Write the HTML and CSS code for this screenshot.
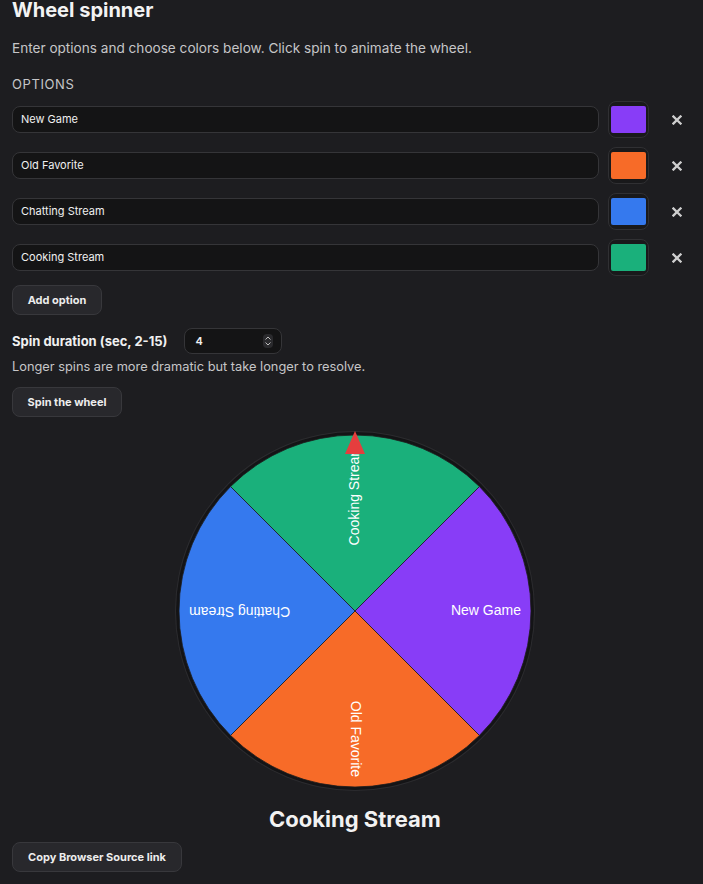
FILE: index.html
```html
<!DOCTYPE html>
<html lang="en">
<head>
<meta charset="utf-8">
<title>Wheel spinner</title>
<link rel="stylesheet" href="styles.css">
</head>
<body>
<main class="page">
  <h1 class="title">Wheel spinner</h1>
  <p class="desc">Enter options and choose colors below. Click spin to animate the wheel.</p>
  <div class="section-label">OPTIONS</div>
  <div class="options">
    <div class="opt-row">
      <div class="text-input">New Game</div>
      <div class="swatch"><span class="swatch-fill purple"></span></div>
      <button class="remove" aria-label="Remove"><svg viewBox="0 0 10 10" width="10" height="10"><path d="M1.5 1.5 L8.5 8.5 M8.5 1.5 L1.5 8.5"/></svg></button>
    </div>
    <div class="opt-row">
      <div class="text-input">Old Favorite</div>
      <div class="swatch"><span class="swatch-fill orange"></span></div>
      <button class="remove" aria-label="Remove"><svg viewBox="0 0 10 10" width="10" height="10"><path d="M1.5 1.5 L8.5 8.5 M8.5 1.5 L1.5 8.5"/></svg></button>
    </div>
    <div class="opt-row">
      <div class="text-input">Chatting Stream</div>
      <div class="swatch"><span class="swatch-fill blue"></span></div>
      <button class="remove" aria-label="Remove"><svg viewBox="0 0 10 10" width="10" height="10"><path d="M1.5 1.5 L8.5 8.5 M8.5 1.5 L1.5 8.5"/></svg></button>
    </div>
    <div class="opt-row">
      <div class="text-input">Cooking Stream</div>
      <div class="swatch"><span class="swatch-fill green"></span></div>
      <button class="remove" aria-label="Remove"><svg viewBox="0 0 10 10" width="10" height="10"><path d="M1.5 1.5 L8.5 8.5 M8.5 1.5 L1.5 8.5"/></svg></button>
    </div>
  </div>
  <button class="btn btn-add">Add option</button>
  <div class="duration">
    <span class="duration-label">Spin duration (sec, 2-15)</span>
    <div class="num-input">
      <span>4</span>
      <span class="stepper"><svg viewBox="0 0 10 14" width="10" height="14"><path d="M2.5 5.5 L5 3 L7.5 5.5 M2.5 8.5 L5 11 L7.5 8.5"/></svg></span>
    </div>
  </div>
  <p class="hint">Longer spins are more dramatic but take longer to resolve.</p>
  <button class="btn btn-spin">Spin the wheel</button>
  <div class="wheel-wrap">
    <svg class="wheel" viewBox="0 0 360 360" width="360" height="360">
      <circle cx="180" cy="180" r="180" fill="#2c2c2f"/>
      <circle cx="180" cy="180" r="179" fill="#141416"/>
      <g stroke="#1d1d1d" stroke-width="0.8">
        <path d="M180 180 L55.55 55.55 A176 176 0 0 1 304.45 55.55 Z" fill="#1ab07b"/>
        <path d="M180 180 L304.45 55.55 A176 176 0 0 1 304.45 304.45 Z" fill="#883df7"/>
        <path d="M180 180 L304.45 304.45 A176 176 0 0 1 55.55 304.45 Z" fill="#f76b28"/>
        <path d="M180 180 L55.55 304.45 A176 176 0 0 1 55.55 55.55 Z" fill="#3579ee"/>
      </g>
      <g class="labels">
        <text x="346" y="180" transform="rotate(0 180 180)">New Game</text>
        <text x="346" y="180" transform="rotate(90 180 180)">Old Favorite</text>
        <text x="346" y="180" transform="rotate(180 180 180)">Chatting Stream</text>
        <text x="346" y="180" transform="rotate(270 180 180)">Cooking Stream</text>
      </g>
      <polygon points="180,0 170,23 190,23" fill="#e53e3e"/>
    </svg>
  </div>
  <div class="result">Cooking Stream</div>
  <button class="btn btn-copy">Copy Browser Source link</button>
</main>
</body>
</html>
```

FILE: styles.css
```css
* { box-sizing: border-box; }
html, body {
  margin: 0;
  background: #1d1d20;
}
body {
  font-family: Inter, "Noto Sans", sans-serif;
  color: #ececec;
}
.page {
  padding: 0 5px 0 12px;
}
.title {
  margin: 0;
  font-size: 20px;
  line-height: 20px;
  font-weight: 700;
  color: #f3f3f3;
}
.desc {
  margin: 18px 0 0;
  font-size: 13.6px;
  line-height: 20px;
  color: #c6c6c8;
}
.section-label {
  margin-top: 17px;
  font-size: 13px;
  line-height: 18px;
  letter-spacing: 0.6px;
  color: #c6c6c8;
}
.options {
  margin-top: 8px;
  padding-right: 9px;
  display: flex;
  flex-direction: column;
  gap: 9px;
}
.opt-row {
  display: grid;
  grid-template-columns: 1fr 57px 24px;
  align-items: center;
  height: 37px;
}
.text-input {
  height: 27px;
  border: 1px solid #353538;
  border-radius: 8px;
  background: #141415;
  font-size: 11px;
  line-height: 25px;
  padding-left: 8px;
  color: #f0f0f0;
  margin-right: 9px;
}
.swatch {
  height: 37px;
  border: 1px solid #303033;
  border-radius: 8px;
  background: #19191b;
  padding: 4px 2px;
  display: flex;
  margin-right: 16px;
}
.swatch-fill {
  flex: 1;
  border-radius: 2px;
}
.purple { background: #883df7; }
.orange { background: #f76b28; }
.blue { background: #3579ee; }
.green { background: #1ab07b; }
.remove {
  background: none;
  border: none;
  padding: 0;
  height: 30px;
  display: flex;
  align-items: center;
  justify-content: center;
}
.remove svg path {
  stroke: #cfcfcf;
  stroke-width: 2.3;
  stroke-linecap: square;
  fill: none;
}
.btn {
  display: block;
  font-family: Inter, "Noto Sans", sans-serif;
  font-size: 11px;
  font-weight: 700;
  color: #ededed;
  background: #28282c;
  border: 1px solid #38383c;
  border-radius: 8px;
  height: 30px;
  padding: 0 14px;
}
.btn-add {
  margin-top: 9px;
  width: 90px;
}
.duration {
  margin-top: 13px;
  display: flex;
  align-items: center;
  gap: 17px;
}
.duration-label {
  font-size: 13px;
  font-weight: 700;
  color: #f0f0f0;
}
.num-input {
  width: 98px;
  height: 26px;
  border: 1px solid #353538;
  border-radius: 8px;
  background: #141415;
  display: flex;
  align-items: center;
  justify-content: space-between;
  padding: 0 8px 0 10px;
  font-size: 11px;
  font-weight: 600;
  color: #f0f0f0;
}
.stepper {
  width: 10px;
  height: 14px;
  border-radius: 4px;
  background: #2a2a2d;
  display: flex;
}
.stepper svg path {
  stroke: #bdbdbd;
  stroke-width: 1;
  fill: none;
}
.hint {
  margin: 4px 0 0;
  font-size: 12.8px;
  line-height: 18px;
  color: #c6c6c8;
}
.btn-spin {
  margin-top: 11px;
  width: 110px;
}
.wheel-wrap {
  margin-top: 14px;
  display: flex;
  justify-content: center;
}
.wheel {
  display: block;
}
.labels text {
  font-family: "Liberation Sans", Arial, sans-serif;
  font-size: 14px;
  fill: #ffffff;
  text-anchor: end;
  dominant-baseline: middle;
}
.result {
  margin-top: 14px;
  text-align: center;
  font-size: 22px;
  line-height: 28px;
  font-weight: 700;
  color: #f2f2f2;
}
.btn-copy {
  margin-top: 9px;
  width: 170px;
}
```
